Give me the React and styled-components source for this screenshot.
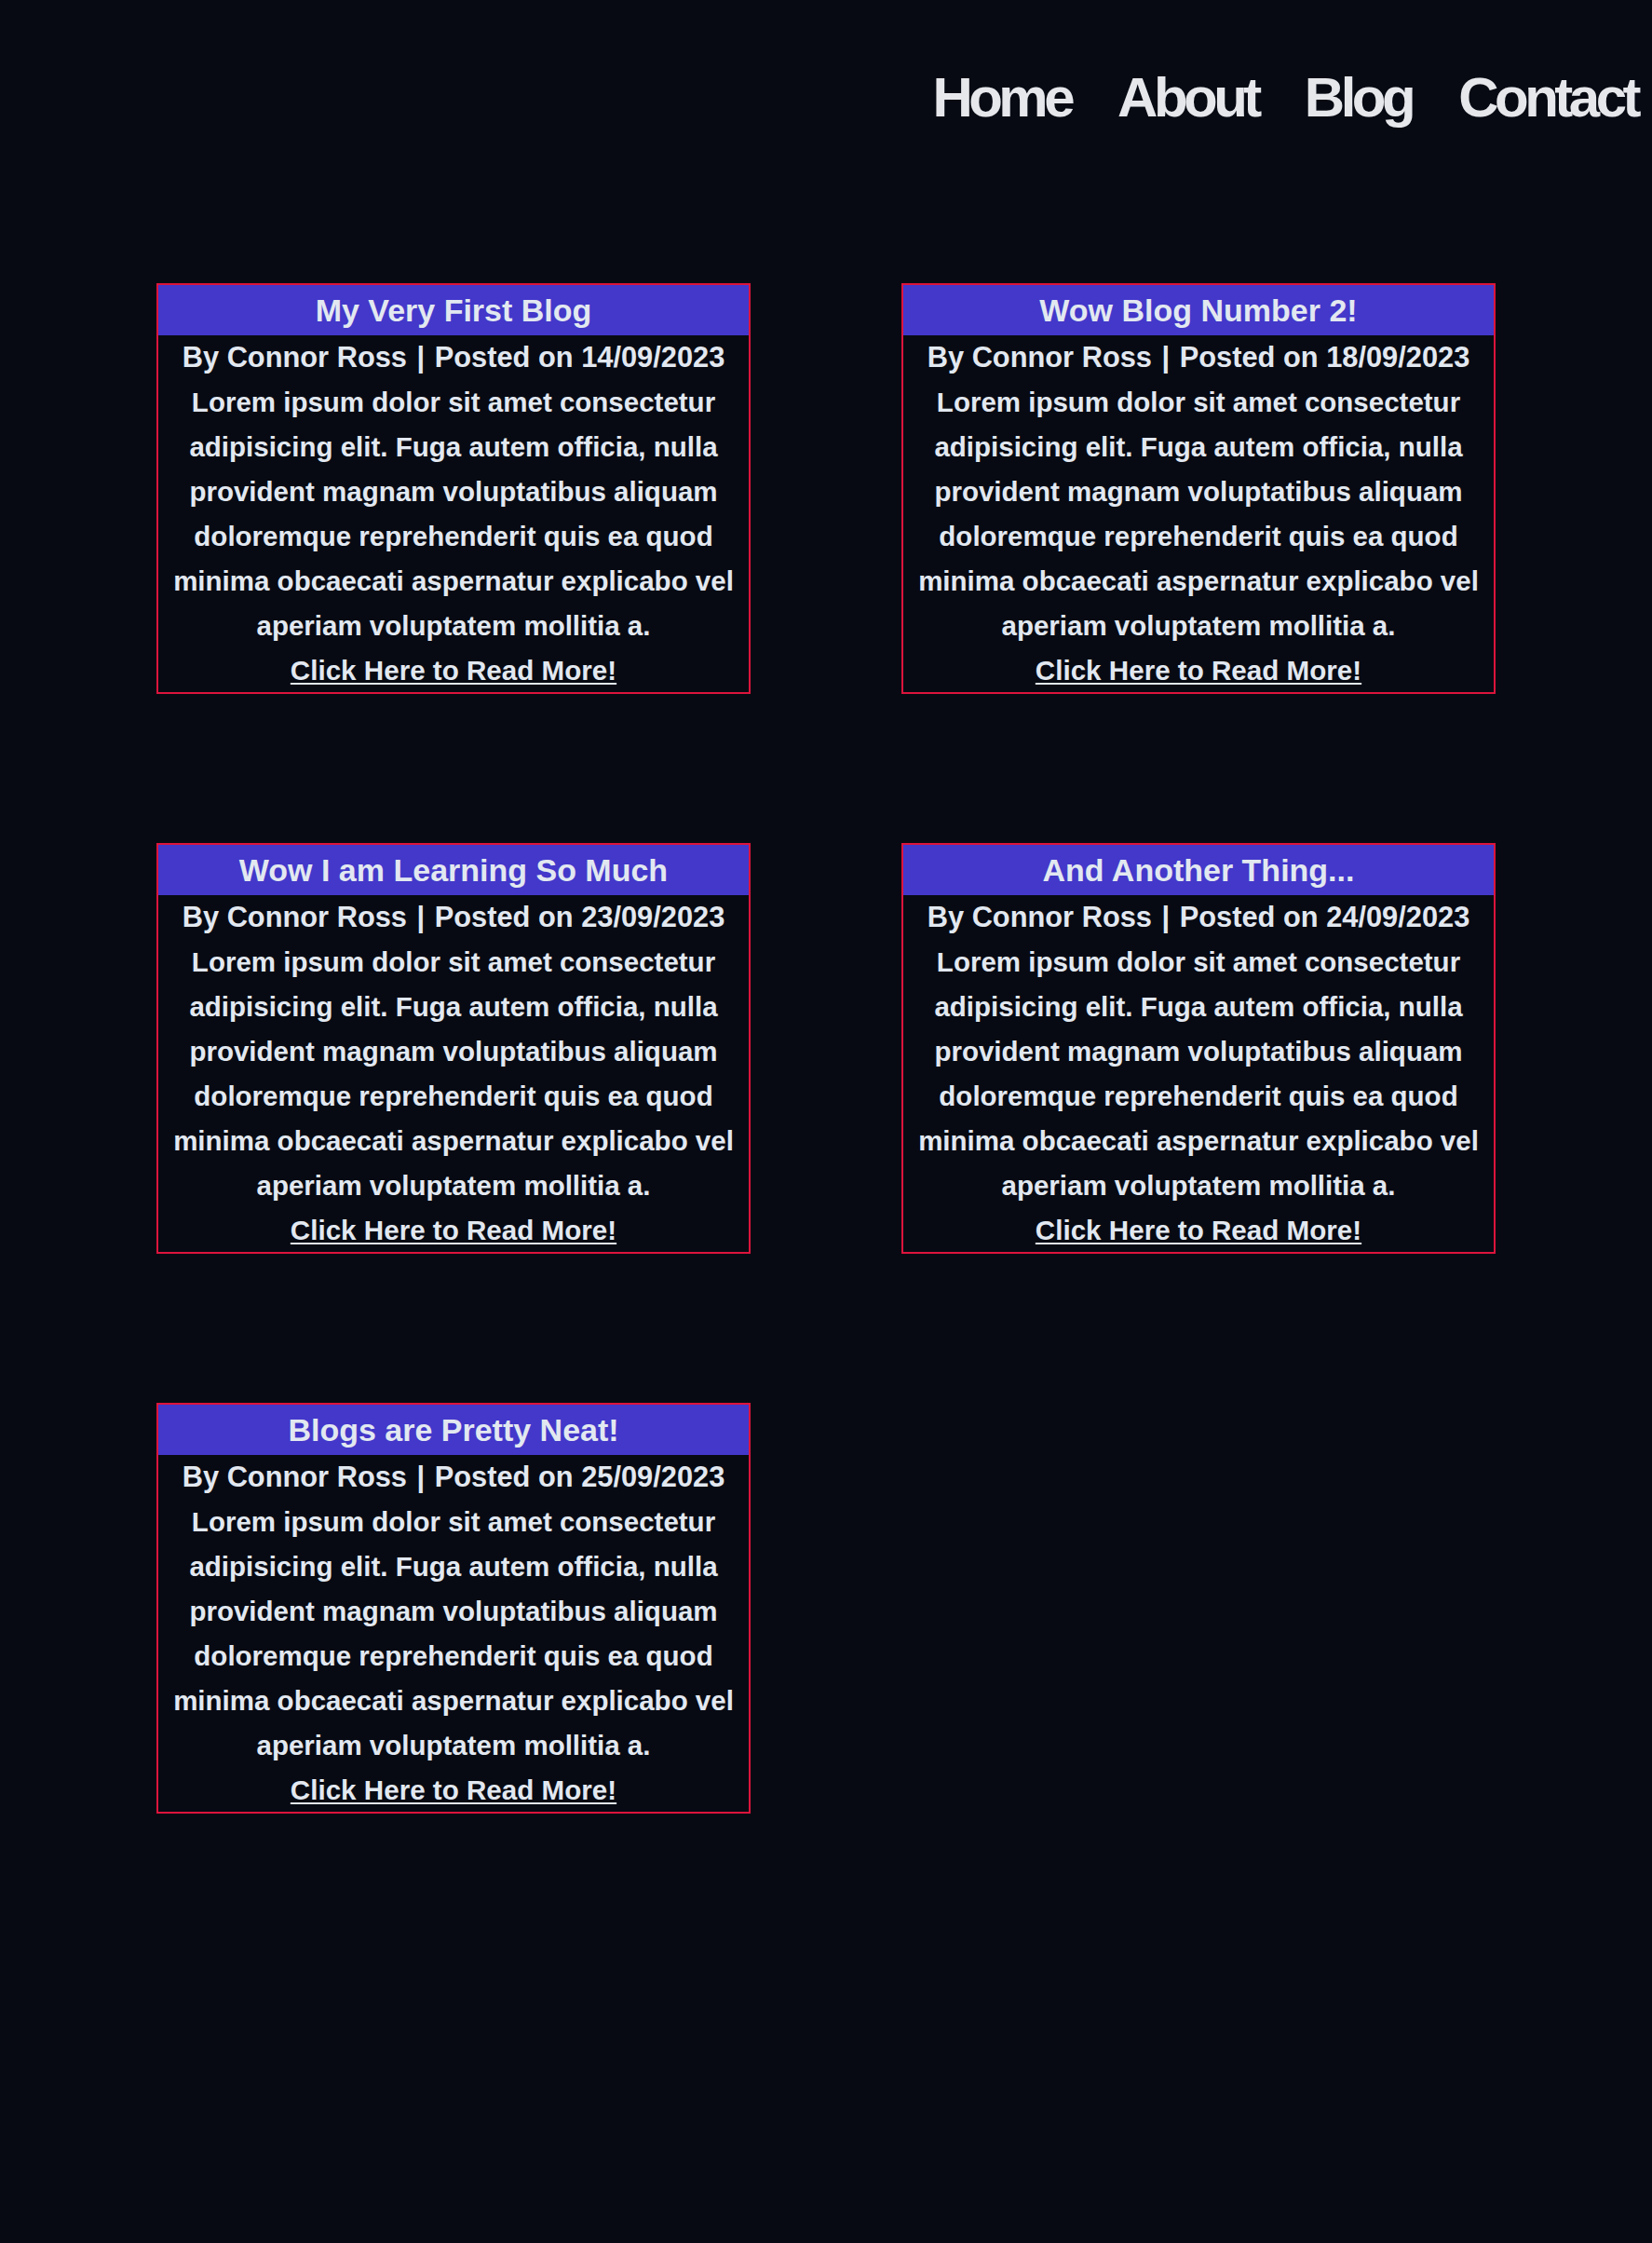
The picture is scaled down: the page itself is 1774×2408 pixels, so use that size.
import styled, { createGlobalStyle } from "styled-components";

const GlobalStyle = createGlobalStyle`
  html, body {
    margin: 0;
    padding: 0;
    background-color: #070a13;
  }

  body {
    min-height: 2408px;
    font-family: "Liberation Sans", Arial, sans-serif;
    color: #e2e8f0;
  }
`;

const Page = styled.div`
  display: flex;
  flex-direction: column;
  width: 100%;
`;

const Nav = styled.nav`
  display: flex;
  justify-content: flex-end;
  gap: 50px;
  padding: 70px 16px 0 0;
  height: 70px;
`;

const NavLink = styled.a`
  font-family: "Liberation Sans", Arial, sans-serif;
  font-size: 60px;
  font-weight: 700;
  line-height: 70px;
  letter-spacing: -4.5px;
  color: #e5e7eb;
  text-decoration: none;
  cursor: pointer;
`;

const Grid = styled.main`
  display: grid;
  grid-template-columns: repeat(2, 638px);
  justify-content: center;
  column-gap: 162px;
  row-gap: 160px;
  padding-top: 164px;
`;

const Card = styled.article`
  display: flex;
  flex-direction: column;
  align-items: center;
  border: 2px solid #dc143c;
  text-align: center;
`;

const Title = styled.h2`
  align-self: stretch;
  margin: 0;
  background-color: #4338ca;
  font-size: 34px;
  font-weight: 700;
  line-height: 54px;
`;

const Byline = styled.p`
  margin: 0;
  font-size: 30.8px;
  font-weight: 700;
  line-height: 48px;
`;

const Separator = styled.span`
  margin-inline: 2px;
`;

const Body = styled.p`
  margin: 0;
  padding-inline: 10px;
  font-size: 29.5px;
  font-weight: 700;
  line-height: 48px;
`;

const ReadMore = styled.a`
  font-size: 29.6px;
  font-weight: 700;
  line-height: 47px;
  color: #e2e8f0;
  text-decoration: underline;
  text-decoration-thickness: 2px;
  text-underline-offset: 3px;
  cursor: pointer;
`;

const lorem =
  "Lorem ipsum dolor sit amet consectetur adipisicing elit. Fuga autem officia, nulla provident magnam voluptatibus aliquam doloremque reprehenderit quis ea quod minima obcaecati aspernatur explicabo vel aperiam voluptatem mollitia a.";

const posts = [
  { title: "My Very First Blog", date: "14/09/2023" },
  { title: "Wow Blog Number 2!", date: "18/09/2023" },
  { title: "Wow I am Learning So Much", date: "23/09/2023" },
  { title: "And Another Thing...", date: "24/09/2023" },
  { title: "Blogs are Pretty Neat!", date: "25/09/2023" },
];

function BlogCard({ title, date }) {
  return (
    <Card>
      <Title>{title}</Title>
      <Byline>
        By Connor Ross <Separator>|</Separator> Posted on {date}
      </Byline>
      <Body>{lorem}</Body>
      <ReadMore>Click Here to Read More!</ReadMore>
    </Card>
  );
}

export default function App() {
  return (
    <>
      <GlobalStyle />
      <Page>
        <Nav>
          <NavLink>Home</NavLink>
          <NavLink>About</NavLink>
          <NavLink>Blog</NavLink>
          <NavLink>Contact</NavLink>
        </Nav>
        <Grid>
          {posts.map((post) => (
            <BlogCard key={post.date} title={post.title} date={post.date} />
          ))}
        </Grid>
      </Page>
    </>
  );
}
